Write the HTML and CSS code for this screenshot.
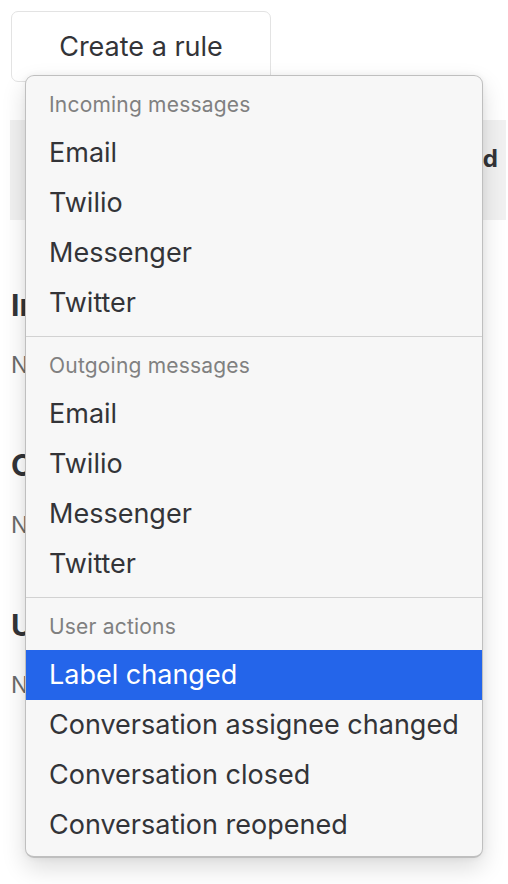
FILE: index.html
```html
<!DOCTYPE html>
<html>
<head>
<meta charset="utf-8">
<link rel="stylesheet" href="styles.css">
</head>
<body>
<div class="page">
  <button class="create-btn">Create a rule</button>
  <div class="panel">
    <span class="panel-title">Last triggered</span>
  </div>
  <section class="group">
    <h2 class="group-title">Incoming messages</h2>
    <p class="group-empty">No rules yet</p>
  </section>
  <section class="group">
    <h2 class="group-title">Outgoing messages</h2>
    <p class="group-empty">No rules yet</p>
  </section>
  <section class="group">
    <h2 class="group-title">User actions</h2>
    <p class="group-empty">No rules yet</p>
  </section>

  <div class="menu">
    <div class="menu-section">
      <div class="menu-header">Incoming messages</div>
      <div class="menu-item">Email</div>
      <div class="menu-item">Twilio</div>
      <div class="menu-item">Messenger</div>
      <div class="menu-item">Twitter</div>
    </div>
    <div class="menu-section">
      <div class="menu-header">Outgoing messages</div>
      <div class="menu-item">Email</div>
      <div class="menu-item">Twilio</div>
      <div class="menu-item">Messenger</div>
      <div class="menu-item">Twitter</div>
    </div>
    <div class="menu-section">
      <div class="menu-header">User actions</div>
      <div class="menu-item active">Label changed</div>
      <div class="menu-item">Conversation assignee changed</div>
      <div class="menu-item">Conversation closed</div>
      <div class="menu-item">Conversation reopened</div>
    </div>
  </div>
</div>
</body>
</html>
```
FILE: styles.css
```css
html, body {
  margin: 0;
  padding: 0;
  background: #ffffff;
  overflow: hidden;
}
body {
  font-family: Inter, "Noto Sans", "Liberation Sans", sans-serif;
  color: #333438;
}
.page {
  position: relative;
  width: 508px;
  height: 884px;
  padding: 11px 0 0 11px;
  box-sizing: border-box;
}
.create-btn {
  display: block;
  width: 260px;
  height: 71px;
  background: #ffffff;
  border: 1px solid #e3e3e3;
  border-radius: 7px;
  font-family: inherit;
  font-size: 27px;
  color: #333438;
  padding: 0 0 1px;
}
.panel {
  margin: 38px 0 0 -1px;
  width: 496px;
  height: 100px;
  background: #f1f1f1;
  display: flex;
  justify-content: flex-end;
  padding: 24px 8px 0 0;
  box-sizing: border-box;
}
.panel-title {
  font-weight: 700;
  font-size: 24px;
}
.group-title {
  margin: 0;
  font-size: 30px;
  font-weight: 700;
  line-height: 40px;
  padding-top: 65px;
}
.group-empty {
  margin: 0;
  font-size: 23px;
  color: #6b6b6b;
  line-height: 30px;
  padding-top: 25px;
}
.menu {
  position: absolute;
  left: 25px;
  top: 75px;
  width: 458px;
  box-sizing: border-box;
  background: #f7f7f7;
  border: 1px solid #bfbfbf;
  border-bottom-width: 2px;
  border-radius: 9px;
  box-shadow: 0 10px 24px rgba(0, 0, 0, 0.14), 0 0 6px rgba(0, 0, 0, 0.06);
  overflow: hidden;
}
.menu-section {
  padding-bottom: 8px;
}
.menu-section + .menu-section {
  border-top: 1px solid #d2d2d2;
}
.menu-section:last-child {
  padding-bottom: 6px;
}
.menu-header {
  height: 47px;
  line-height: 47px;
  padding: 5px 23px 0;
  font-size: 21px;
  color: #808080;
  letter-spacing: 0.2px;
}
.menu-item {
  height: 50px;
  line-height: 50px;
  padding: 0 23px;
  font-size: 27px;
  color: #333438;
  white-space: nowrap;
}
.menu-item.active {
  background: #2465ea;
  color: #ffffff;
}
```
